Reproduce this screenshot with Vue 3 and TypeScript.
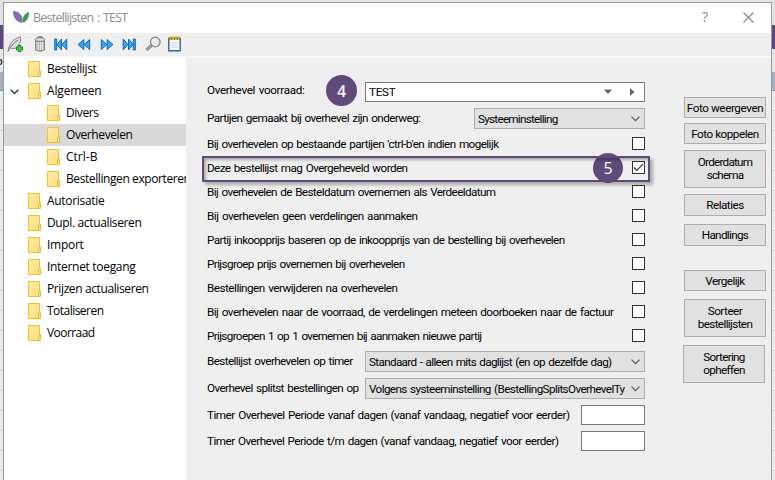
<script setup lang="ts">
import type { Directive } from 'vue'

interface Txt { text: string; w: number }
interface TreeNode extends Txt { child?: boolean; open?: boolean; selected?: boolean }
interface Check extends Txt { on?: boolean }
interface SideButton { lines: Txt[]; kind: string }

// Tracks a line of text so that it spans the given number of pixels.
const vFit: Directive<HTMLElement, number> = {
  mounted(el, binding) {
    const natural = el.getBoundingClientRect().width
    const count = (el.textContent ?? '').length
    if (count > 0) el.style.letterSpacing = `${(binding.value + 0.5 - natural) / count}px`
  },
}

const tree: TreeNode[] = [
  { text: 'Bestellijst', w: 49 },
  { text: 'Algemeen', w: 54, open: true },
  { text: 'Divers', w: 32, child: true },
  { text: 'Overhevelen', w: 66, child: true, selected: true },
  { text: 'Ctrl-B', w: 31, child: true },
  { text: 'Bestellingen exporteren', w: 124, child: true },
  { text: 'Autorisatie', w: 57 },
  { text: 'Dupl. actualiseren', w: 94 },
  { text: 'Import', w: 36 },
  { text: 'Internet toegang', w: 88 },
  { text: 'Prijzen actualiseren', w: 101 },
  { text: 'Totaliseren', w: 56 },
  { text: 'Voorraad', w: 47 },
]

const checks: Check[] = [
  { text: "Bij overhevelen op bestaande partijen 'ctrl-b'en indien mogelijk", w: 291 },
  { text: 'Deze bestellijst mag Overgeheveld worden', w: 200, on: true },
  { text: 'Bij overhevelen de Besteldatum overnemen als Verdeeldatum', w: 288 },
  { text: 'Bij overhevelen geen verdelingen aanmaken', w: 210 },
  { text: 'Partij inkoopprijs baseren op de inkoopprijs van de bestelling bij overhevelen', w: 357 },
  { text: 'Prijsgroep prijs overnemen bij overhevelen', w: 197 },
  { text: 'Bestellingen verwijderen na overhevelen', w: 190 },
  { text: 'Bij overhevelen naar de voorraad, de verdelingen meteen doorboeken naar de factuur', w: 406 },
  { text: 'Prijsgroepen 1 op 1 overnemen bij aanmaken nieuwe partij', w: 274 },
]

const buttons: SideButton[] = [
  { kind: 'photo', lines: [{ text: 'Foto weergeven', w: 76 }] },
  { kind: 'link', lines: [{ text: 'Foto koppelen', w: 67 }] },
  { kind: 'tall', lines: [{ text: 'Orderdatum', w: 54 }, { text: 'schema', w: 36 }] },
  { kind: 'relations', lines: [{ text: 'Relaties', w: 37 }] },
  { kind: 'handlings', lines: [{ text: 'Handlings', w: 46 }] },
  { kind: 'compare', lines: [{ text: 'Vergelijk', w: 39 }] },
  { kind: 'tall sort', lines: [{ text: 'Sorteer', w: 34 }, { text: 'bestellijsten', w: 54 }] },
  { kind: 'tall unsort', lines: [{ text: 'Sortering', w: 41 }, { text: 'opheffen', w: 41 }] },
]
</script>

<template>
  <div class="desktop">
    <div class="edge left">
      <div class="sky"></div><div class="band"></div><div class="strip"><span>o</span></div><div class="head"></div><div class="lines"></div>
    </div>
    <main class="dialog">
      <header class="titlebar">
        <svg class="logo" width="18" height="14" viewBox="0 0 18 14">
          <path d="M1 1C8 1.5 11.5 6 10.4 12.8C4.5 12.3 1 8 1 1Z" fill="#8b6bb0" />
          <path d="M17 2C17.2 7.5 15 11.3 10.8 12.8C10.3 7 12 4 17 2Z" fill="#3c9a52" />
        </svg>
        <span v-fit="94" class="title">Bestellijsten : TEST</span>
        <span class="help">?</span>
        <svg class="close" width="11" height="11" viewBox="0 0 11 11"><path d="M.5 .5L10.5 10.5M10.5 .5L.5 10.5" stroke="#868686" stroke-width="1.1" /></svg>
      </header>
      <nav class="toolbar">
        <svg width="17" height="17" viewBox="0 0 17 17">
          <path d="M1 15.5C2 9 5 2.5 13.5 1C13.8 5 13 10 8 12.5L3.5 12.3" fill="#ddd" stroke="#8c8c8c" />
          <path d="M1 15.5C3 11 6 7 11 4" fill="none" stroke="#777" />
          <path d="M12.5 9V16M9 12.5H16" stroke="#15801b" stroke-width="3.4" />
          <path d="M12.5 9.8V15.2M9.8 12.5H15.2" stroke="#43cc3d" stroke-width="1.8" />
        </svg>
        <svg width="12" height="16" viewBox="0 0 12 16">
          <path d="M1.5 4V14Q6 16.5 10.5 14V4" fill="#bcbcbc" stroke="#858585" />
          <path d="M4 6V14M6.5 6V14M8.5 6V14" stroke="#e8e8e8" />
          <ellipse cx="6" cy="3.5" rx="4.8" ry="2" fill="#ddd" stroke="#777" /><path d="M4 2V.8H8V2" fill="none" stroke="#777" />
        </svg>
        <svg width="14" height="13" viewBox="0 0 14 13"><path class="jump" d="M.7 1H2.7V12H.7ZM7.5 1V12L2.9 6.5ZM12.8 1V12L8 6.5Z" /></svg>
        <svg width="14" height="13" viewBox="0 0 14 13"><path class="jump" d="M6.8 1.5V11.5L1 6.5ZM12.7 1.5V11.5L7 6.5Z" /></svg>
        <svg width="14" height="13" viewBox="0 0 14 13"><path class="jump" d="M1.3 1.5V11.5L7 6.5ZM7.2 1.5V11.5L13 6.5Z" /></svg>
        <svg width="14" height="13" viewBox="0 0 14 13"><path class="jump" d="M13.3 1H11.3V12H13.3ZM6.5 1V12L11.1 6.5ZM1.2 1V12L6 6.5Z" /></svg>
        <svg width="17" height="16" viewBox="0 0 17 16">
          <path d="M6.5 9.5L1.5 14" stroke="#777" stroke-width="3" /><path d="M6.5 9.5L1.7 13.8" stroke="#c9c9c9" />
          <circle cx="10.3" cy="6" r="4.8" fill="#e7e7e7" stroke="#858585" stroke-width="1.3" /><path d="M7.5 6Q8 3.5 10.3 3.3" fill="none" stroke="#fff" />
        </svg>
        <svg width="13" height="16" viewBox="0 0 13 16">
          <path d="M.8 2.5H12.2V14.8H.8Z" fill="#fff" stroke="#2763a9" stroke-width="1.4" /><path d="M1 2.5H12" stroke="#30507c" stroke-width="2.2" />
          <path d="M2.5 .3V4.2M5.2 .3V4.2M7.9 .3V4.2M10.6 .3V4.2" stroke="#f6b90f" stroke-width="1.6" />
          <path d="M3 6.8H10.5M3 9H10.5M3 11.2H10.5" stroke="#c0cbd8" stroke-width=".9" />
        </svg>
      </nav>
      <div class="body">
        <aside class="tree">
          <div v-for="n in tree" :key="n.text" class="node" :class="{ child: n.child, selected: n.selected }">
            <span class="twist"><svg v-if="n.open" width="9" height="6" viewBox="0 0 9 6"><path d="M.7 .8L4.5 4.5L8.3 .8" fill="none" stroke="#404040" stroke-width="1.6" /></svg></span>
            <svg class="folder" width="13" height="16" viewBox="0 0 13 16">
              <defs><linearGradient id="fold" x2="1" y2="1"><stop stop-color="#ffeaa5" /><stop offset="1" stop-color="#ffdf80" /></linearGradient></defs>
              <path d="M.5 .5H11.5V15.5H.5Z" fill="url(#fold)" stroke="#ebc52d" /><path d="M10.5 15.5V10.5L12.5 9.5V15.5Z" fill="#ffe591" stroke="#e3b91e" stroke-width=".9" />
            </svg>
            <span v-fit="n.w" class="name">{{ n.text }}</span>
          </div>
        </aside>
        <section class="form">
          <div class="row stock">
            <span v-fit="97" class="label">Overhevel voorraad:</span>
            <div class="field wide"><span v-fit="26">TEST</span>
              <svg class="tri" width="35" height="8" viewBox="0 0 35 8"><path d="M1 1.5H9L5 6Z M27 0L31.5 4L27 8Z" fill="#636363" /></svg>
            </div>
          </div>
          <div class="row">
            <span v-fit="213" class="label">Partijen gemaakt bij overhevel zijn onderweg:</span>
            <div class="select short"><div class="value"><span v-fit="79">Systeeminstelling</span></div><svg width="9" height="6" viewBox="0 0 9 6"><path class="chev" d="M.5 .7L4.5 4.7L8.5 .7" /></svg></div>
          </div>
          <div class="checks">
            <div v-for="c in checks" :key="c.text" class="check">
              <span v-fit="c.w" class="label">{{ c.text }}</span>
              <span class="box"><svg v-if="c.on" width="11" height="11" viewBox="0 0 11 11"><path d="M1 5.5L3.8 8.4L10 2.2" fill="none" stroke="#333" stroke-width="1.2" /></svg></span>
            </div>
          </div>
          <div class="row">
            <span v-fit="145" class="label">Bestellijst overhevelen op timer</span>
            <div class="select"><div class="value"><span v-fit="242">Standaard - alleen mits daglijst (en op dezelfde dag)</span></div><svg width="9" height="6" viewBox="0 0 9 6"><path class="chev" d="M.5 .7L4.5 4.7L8.5 .7" /></svg></div>
          </div>
          <div class="row">
            <span v-fit="151" class="label">Overhevel splitst bestellingen op</span>
            <div class="select"><div class="value"><span v-fit="261">Volgens systeeminstelling (BestellingSplitsOverhevelTyp</span></div><svg width="9" height="6" viewBox="0 0 9 6"><path class="chev" d="M.5 .7L4.5 4.7L8.5 .7" /></svg></div>
          </div>
          <div class="row"><span v-fit="362" class="label">Timer Overhevel Periode vanaf dagen (vanaf vandaag, negatief voor eerder)</span><div class="field"></div></div>
          <div class="row"><span v-fit="351" class="label">Timer Overhevel Periode t/m dagen (vanaf vandaag, negatief voor eerder)</span><div class="field"></div></div>
        </section>
        <section class="actions">
          <button v-for="b in buttons" :key="b.lines[0].text" :class="b.kind">
            <span v-for="l in b.lines" :key="l.text" v-fit="l.w">{{ l.text }}</span>
          </button>
        </section>
      </div>
    </main>
    <div class="edge right">
      <div class="sky"></div><div class="band"></div><div class="strip"></div><div class="head"></div><div class="lines"></div>
    </div>
    <div class="badge four">4</div>
    <div class="badge five">5</div>
    <div class="highlight"></div>
  </div>
</template>

<style>
body { margin: 0; overflow: hidden; }
</style>

<style scoped>
* { box-sizing: border-box; }
.desktop { position: relative; display: flex; width: 775px; height: 480px; overflow: hidden; background: #e5e5e5; font: 11.7px/14px Roboto, "Liberation Sans", sans-serif; word-spacing: 1px; color: #000; }
.edge { display: flex; flex-direction: column; overflow: hidden; }
.edge.left { width: 3px; }
.edge.right { width: 3px; }
.sky { height: 25px; background: #e2e2e2; flex: none; }
.band { height: 24px; background: #5f4785; flex: none; }
.strip { height: 23px; background: #e5e5e5; flex: none; overflow: hidden; }
.strip span { display: block; margin: 5px 0 0 -4px; }
.head { height: 19px; background: #a3b1c1; border-bottom: 1px solid #8b96a3; flex: none; }
.lines { flex: 1; background: repeating-linear-gradient(#ebebeb 0 19px, #cfcfcf 19px 20px); }
.dialog { width: 769px; height: 480px; margin-top: 2px; border: 1px solid #9a9a9a; border-bottom: 0; background: #efefef; display: flex; flex-direction: column; flex: none; }
.titlebar { height: 30px; flex: none; background: #fff; display: flex; align-items: center; padding: 0 17px 0 8px; }
.logo { flex: none; margin-top: -2px; }
.title { margin-left: 3px; font: 12.5px/18px "Open Sans", "Noto Sans", sans-serif; color: #8f8f8f; white-space: nowrap; margin-top: -1px; }
.help { margin-left: auto; font: 14px/18px "Open Sans", sans-serif; color: #868686; margin-top: -2px; }
.close { margin-left: 35px; flex: none; margin-top: -2px; }
.toolbar { height: 25px; flex: none; display: flex; align-items: center; border-bottom: 2px solid #f7f9fc; padding: 0 0 1px 3px; }
.toolbar svg { flex: none; }
.toolbar svg:nth-child(2) { margin-left: 10px; }
.toolbar svg:nth-child(3) { margin-left: 8px; }
.toolbar svg:nth-child(4) { margin-left: 9px; }
.toolbar svg:nth-child(5) { margin-left: 9px; }
.toolbar svg:nth-child(6) { margin-left: 8px; }
.toolbar svg:nth-child(7) { margin-left: 9px; }
.toolbar svg:nth-child(8) { margin-left: 6px; }
.jump { fill: #35a5ef; stroke: #1767b5; stroke-width: 1; }
.body { display: flex; flex: 1; min-height: 0; }
.tree { width: 182px; flex: none; background: #fff; overflow: hidden; }
.node { height: 22px; display: flex; align-items: center; overflow: hidden; font: 12px/18px "Open Sans", "Noto Sans", sans-serif; white-space: nowrap; word-spacing: 0; }
.node.selected { background: #d9d9d9; }
.twist { width: 24px; padding-left: 6px; flex: none; display: flex; margin-top: 1px; }
.child .twist { width: 43px; }
.folder { flex: none; }
.name { margin-left: 6px; flex: none; }
.form { width: 459px; flex: none; padding: 24px 0 0 21px; display: flex; flex-direction: column; gap: 6px; }
.form span { white-space: nowrap; flex: none; }
.row { display: flex; align-items: center; justify-content: space-between; }
.label { line-height: 14px; margin-top: -1px; }
.stock .label { margin-top: -4px; }
.field { height: 20px; width: 64px; flex: none; border: 1px solid #7a7a7a; background: #fff; display: flex; align-items: center; justify-content: space-between; padding: 0 6px 0 3px; }
.field.wide { width: 280px; }
.select { width: 280px; height: 21px; flex: none; border: 1px solid #adadad; background: #e1e1e1; display: flex; align-items: center; justify-content: space-between; padding: 1px 4px 0 3px; }
.select.short { width: 171px; }
.value { overflow: hidden; flex: 1; margin-right: 6px; display: flex; }
.select svg { flex: none; }
.chev { fill: none; stroke: #555; stroke-width: 1.2; }
.checks { margin: -4px 0 -2px; }
.check { height: 24px; display: flex; justify-content: space-between; align-items: center; padding-top: 1px; }
.check .label { margin-top: 1px; }
.box { width: 13px; height: 13px; border: 1px solid #333; background: #fff; display: flex; }
.actions { flex: none; width: 126px; padding: 39px 0 0 39px; display: flex; flex-direction: column; }
button { width: 82px; flex: none; padding: 0; border: 1px solid #adadad; background: #e1e1e1; font: 11.7px/13px Roboto, sans-serif; color: #000; display: flex; flex-direction: column; align-items: center; justify-content: center; white-space: nowrap; }
button span { display: block; }
.photo, .link, .compare { height: 21px; padding-top: 1px; }
.link { margin-top: 5px; }
.tall { height: 38px; margin-top: 6px; }
.relations { height: 22px; margin-top: 6px; }
.handlings { height: 22px; margin-top: 8px; }
.compare { margin-top: 24px; }
.sort { margin-top: 8px; }
.unsort { margin: 8px 0 0 -1px; }
.badge { position: absolute; border-radius: 50%; background: #604a7b; color: #fff; display: flex; align-items: center; justify-content: center; font: 500 16px/18px "Open Sans", sans-serif; }
.four { left: 326px; top: 75px; width: 31px; height: 31px; font-weight: 600; }
.five { left: 593px; top: 153px; width: 30px; height: 30px; }
.highlight { position: absolute; left: 202px; top: 156px; width: 448px; height: 26px; border: 2px solid #604a7b; box-shadow: 3px 3px 3px rgba(0,0,0,.28), inset 2px 2px 3px rgba(0,0,0,.3); }
</style>
